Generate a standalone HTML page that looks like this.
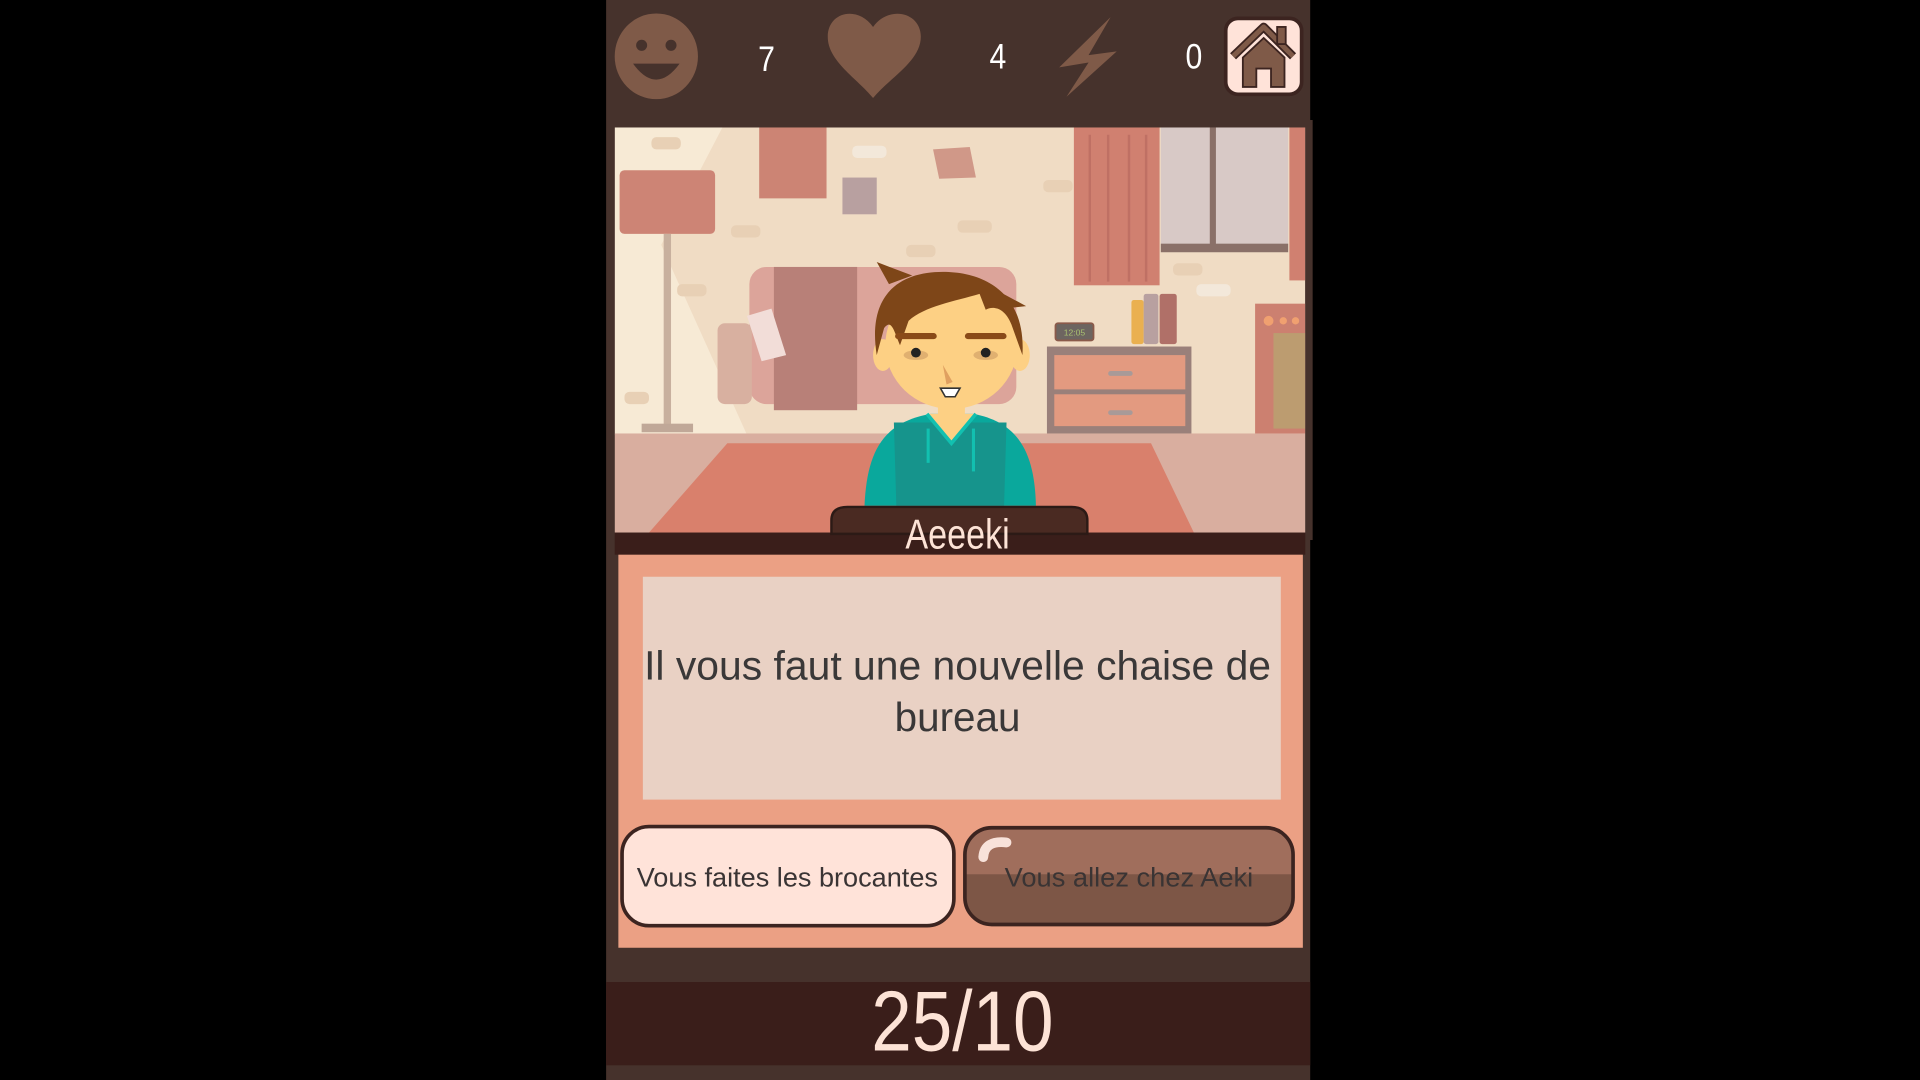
<!DOCTYPE html>
<html><head><meta charset="utf-8"><style>
html,body{margin:0;padding:0;background:#000;width:1920px;height:1080px;overflow:hidden}
svg{display:block}
text{font-family:"Liberation Sans",sans-serif}
</style></head><body>
<svg width="1920" height="1080" viewBox="0 0 1568 882" xmlns="http://www.w3.org/2000/svg">
<rect x="0" y="0" width="1568" height="882" fill="#000"/>
<rect x="495" y="0" width="575" height="882" fill="#46322c"/>
<ellipse cx="536" cy="46" rx="34" ry="35" fill="#7f5a48"/>
<circle cx="524" cy="37" r="4.5" fill="#46322c"/>
<circle cx="548" cy="37" r="4.5" fill="#46322c"/>
<path d="M517 52 Q536 78 555 52 Z" fill="#46322c"/>
<text x="626" y="58" font-size="29" fill="#fff" text-anchor="middle" transform="translate(626 0) scale(0.85 1) translate(-626 0)">7</text>
<path d="M713 80 C700 64 676 50 676 30 C676 10 700 4 713 22 C726 4 752 10 752 30 C752 50 726 64 713 80 Z" fill="#7f5a48"/>
<text x="815" y="56" font-size="29" fill="#fff" text-anchor="middle" transform="translate(815 0) scale(0.85 1) translate(-815 0)">4</text>
<path d="M907 14 L865 55 L889 51 L871 79 L912 42 L889 45 Z" fill="#7f5a48"/>
<text x="975" y="56" font-size="29" fill="#fff" text-anchor="middle" transform="translate(975 0) scale(0.85 1) translate(-975 0)">0</text>
<rect x="1001" y="15" width="62" height="62" rx="10" fill="#ffe3d9" stroke="#3c2420" stroke-width="3"/>
<path d="M1007 46 L1032 22 L1056 46" fill="none" stroke="#3c2420" stroke-width="7" stroke-linejoin="round"/>
<path d="M1007 46 L1032 22 L1056 46" fill="none" stroke="#7f5a48" stroke-width="4" stroke-linejoin="round"/>
<rect x="1043" y="22" width="7" height="14" fill="#7f5a48" stroke="#3c2420" stroke-width="1.5"/>
<path d="M1015 47 L1032 31 L1049 47 L1049 71 L1038 71 L1038 56 L1026 56 L1026 71 L1015 71 Z" fill="#7f5a48" stroke="#3c2420" stroke-width="1.5"/>

<clipPath id="sc"><rect x="502" y="104" width="564" height="331"/></clipPath>
<g clip-path="url(#sc)">
<rect x="502" y="104" width="564" height="331" fill="#f0dcc4"/>
<polygon points="502,104 590,104 540,200 610,355 502,355" fill="#f7ead5"/>
<g fill="#e8d0b5"><rect x="532" y="112" width="24" height="10" rx="4"/><rect x="696" y="119" width="28" height="10" rx="4" fill="#f3e8da"/><rect x="597" y="184" width="24" height="10" rx="4"/><rect x="740" y="200" width="24" height="10" rx="4"/><rect x="782" y="180" width="28" height="10" rx="4"/><rect x="852" y="147" width="24" height="10" rx="4"/><rect x="958" y="215" width="24" height="10" rx="4"/><rect x="977" y="232" width="28" height="10" rx="4" fill="#f3e8da"/><rect x="553" y="232" width="24" height="10" rx="4"/><rect x="510" y="320" width="20" height="10" rx="4"/><rect x="1041" y="352" width="20" height="10" rx="4"/></g>
<rect x="620" y="104" width="55" height="58" fill="#cc8474"/>
<rect x="688" y="145" width="28" height="30" fill="#b8a0a0"/>
<polygon points="762,122 792,120 797,145 767,146" fill="#d09888"/>
<rect x="948" y="104" width="104" height="100" fill="#d8c9c6"/>
<rect x="948" y="199" width="104" height="7" fill="#8a7068"/>
<rect x="988" y="104" width="5" height="100" fill="#8a7068"/>
<rect x="877" y="104" width="70" height="129" fill="#d08070"/>
<g stroke="#bf7064" stroke-width="2"><line x1="890" y1="110" x2="890" y2="230"/><line x1="905" y1="110" x2="905" y2="230"/><line x1="922" y1="110" x2="922" y2="230"/><line x1="936" y1="110" x2="936" y2="230"/></g>
<rect x="1053" y="104" width="13" height="125" fill="#d08070"/>
<rect x="506" y="139" width="78" height="52" rx="4" fill="#cd8475"/>
<rect x="542" y="191" width="6" height="158" fill="#c8b09e"/>
<rect x="524" y="346" width="42" height="7" fill="#c0a898"/>
<rect x="612" y="218" width="218" height="112" rx="14" fill="#dca49a"/>
<rect x="586" y="264" width="28" height="66" rx="6" fill="#d8b0a0"/>
<rect x="632" y="218" width="68" height="117" fill="#b88078"/>
<polygon points="610,258 630,252 642,290 622,295" fill="#f2ddd8"/>
<rect x="502" y="354" width="564" height="81" fill="#d9ae9f"/>
<polygon points="594,362 940,362 975,435 530,435" fill="#d9806c"/>
<rect x="855" y="283" width="118" height="71" fill="#9a807a"/>
<rect x="861" y="290" width="107" height="28" fill="#e39a80"/>
<rect x="861" y="322" width="107" height="26" fill="#e39a80"/>
<rect x="905" y="303" width="20" height="4" rx="2" fill="#a89a98"/>
<rect x="905" y="335" width="20" height="4" rx="2" fill="#a89a98"/>
<rect x="862" y="264" width="31" height="14" rx="2" fill="#6d6560" stroke="#8a5a4a" stroke-width="1.5"/>
<text x="877.5" y="274" font-size="7" fill="#a8c070" text-anchor="middle">12:05</text>
<rect x="924" y="245" width="10" height="36" rx="2" fill="#eab050"/>
<rect x="934" y="240" width="12" height="41" rx="2" fill="#b8a0a0"/>
<rect x="947" y="240" width="14" height="41" rx="2" fill="#b07068"/>
<rect x="1025" y="248" width="41" height="106" fill="#cc8070"/>
<rect x="1040" y="272" width="26" height="78" fill="#bc9c70"/>
<circle cx="1036" cy="262" r="4" fill="#f0a070"/><circle cx="1048" cy="262" r="3" fill="#f0a070"/><circle cx="1058" cy="262" r="3" fill="#f0a070"/>
<path d="M706 413 C708 370 720 345 760 338 L795 338 C832 345 845 370 846 413 Z" fill="#0aa89c"/>
<path d="M730 345 L822 345 L820 413 L732 413 Z" fill="#16948c"/>
<path d="M757 338 L777 360 L797 338 Z" fill="#fdd084"/>
<path d="M757 338 L777 362 L797 338" fill="none" stroke="#12c0b0" stroke-width="3"/>
<line x1="758" y1="350" x2="758" y2="378" stroke="#12c0b0" stroke-width="2.5"/>
<line x1="795" y1="350" x2="795" y2="385" stroke="#12c0b0" stroke-width="2.5"/>
<rect x="766" y="320" width="22" height="20" fill="#fdd084"/>
<ellipse cx="721" cy="290" rx="8" ry="13" fill="#fdd084"/>
<ellipse cx="833" cy="290" rx="8" ry="13" fill="#fdd084"/>
<ellipse cx="777" cy="282" rx="54" ry="52" fill="#fdd084"/>
<path d="M716 290 C708 240 735 222 770 222 C805 222 838 240 835 290 L826 265 C820 250 810 250 805 253 L800 240 C780 246 755 250 742 262 L735 282 C730 270 728 260 722 268 Z" fill="#7e4618"/>
<path d="M726 232 L716 214 L745 225 Z M812 236 L838 250 L820 252 Z" fill="#7e4618"/>
<rect x="731" y="272" width="34" height="5" rx="2.5" fill="#8a4a18"/>
<rect x="788" y="272" width="34" height="5" rx="2.5" fill="#8a4a18"/>
<ellipse cx="748" cy="290" rx="10" ry="4" fill="#e0b070"/><ellipse cx="805" cy="290" rx="10" ry="4" fill="#e0b070"/>
<circle cx="748" cy="288" r="4" fill="#222"/><circle cx="805" cy="288" r="4" fill="#222"/>
<path d="M770 298 L778 312 L773 314 Z" fill="#e0a060"/>
<path d="M768 317 L784 317 L780 324 L772 324 Z" fill="#fff" stroke="#333" stroke-width="1.3"/>
</g>
<rect x="499" y="101" width="570" height="337" fill="none" stroke="#46322c" stroke-width="6"/>
<rect x="502" y="435" width="564" height="18" fill="#3a1e1a"/>
<path d="M679 436 L679 425 Q679 414 692 414 L875 414 Q888 414 888 425 L888 436 Z" fill="#4a2a22" stroke="#2c1a16" stroke-width="2"/>
<text x="782" y="448" font-size="34" fill="#fde3d6" text-anchor="middle" transform="translate(782 0) scale(0.82 1) translate(-782 0)">Aeeeki</text>
<rect x="505" y="453" width="559" height="321" fill="#eba084"/>
<rect x="525" y="471" width="521" height="182" fill="#e9d1c4"/>
<text x="782" y="555" font-size="33" fill="#3a3838" text-anchor="middle" textLength="512" lengthAdjust="spacingAndGlyphs">Il vous faut une nouvelle chaise de</text>
<text x="782" y="597" font-size="33" fill="#3a3838" text-anchor="middle">bureau</text>
<rect x="508" y="675" width="271" height="81" rx="22" fill="#ffe3d9" stroke="#3c2420" stroke-width="3"/>
<text x="643" y="724" font-size="22" fill="#3a3434" text-anchor="middle" textLength="246" lengthAdjust="spacingAndGlyphs">Vous faites les brocantes</text>
<clipPath id="b2"><rect x="788" y="676" width="268" height="79" rx="22"/></clipPath>
<g clip-path="url(#b2)"><rect x="788" y="676" width="268" height="79" fill="#7d5646"/><rect x="788" y="676" width="268" height="38" fill="#a06e5c"/></g>
<rect x="788" y="676" width="268" height="79" rx="22" fill="none" stroke="#3c2420" stroke-width="3"/>
<path d="M803 700 Q804 686 822 688" fill="none" stroke="#f8e2da" stroke-width="8" stroke-linecap="round"/>
<text x="922" y="724" font-size="22" fill="#3a3434" text-anchor="middle" textLength="203" lengthAdjust="spacingAndGlyphs">Vous allez chez Aeki</text>
<rect x="495" y="802" width="575" height="68" fill="#3a1e1a"/>
<text x="786" y="858" font-size="70" fill="#fde3d6" text-anchor="middle" transform="translate(786 0) scale(0.85 1) translate(-786 0)">25/10</text>
</svg>
</body></html>
